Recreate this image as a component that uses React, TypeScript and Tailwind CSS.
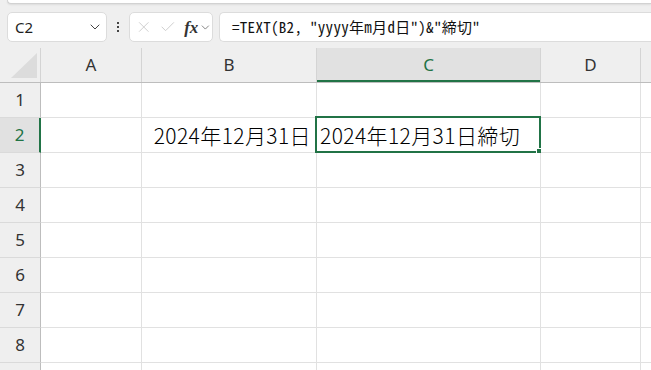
import { Check, ChevronDown, X } from "lucide-react";

const columns = [
  { id: "A", width: "w-[101px]" },
  { id: "B", width: "w-[175px]" },
  { id: "C", width: "w-[224px]" },
  { id: "D", width: "w-[100px]" },
];

const rows = [1, 2, 3, 4, 5, 6, 7, 8, 9];

const ui = { fontFamily: '"Noto Sans", "Open Sans", sans-serif' };
const jp = { fontFamily: '"Noto Sans CJK JP", "Noto Sans", sans-serif' };

function FormulaBar() {
  return (
    <div className="flex items-center h-[30px] mt-[8px] pl-[7px] shrink-0">
      {/* Name box */}
      <div className="flex items-center justify-between w-[100px] h-full bg-white border border-[#dcdcdc] rounded-[5px] pl-[7px] pr-[3px]">
        <span className="text-[15px] text-[#1f1f1f]" style={ui}>
          C2
        </span>
        <ChevronDown size={16} strokeWidth={1.5} className="text-[#444]" />
      </div>

      {/* Grip dots */}
      <div className="flex flex-col items-center justify-center gap-[2px] w-[22px]">
        <span className="w-[2px] h-[2px] bg-[#444]" />
        <span className="w-[2px] h-[2px] bg-[#444]" />
        <span className="w-[2px] h-[2px] bg-[#444]" />
      </div>

      {/* Cancel / enter / fx */}
      <div className="flex items-center w-[84px] h-full bg-white border border-[#dcdcdc] rounded-[5px] pl-[5px]">
        <X size={18} strokeWidth={1.2} className="text-[#c8c8c8]" />
        <Check size={18} strokeWidth={1.2} className="text-[#c8c8c8] ml-[6px]" />
        <span
          className="ml-[8px] text-[17px] italic font-semibold text-[#333] leading-none"
          style={{ fontFamily: '"Liberation Serif", serif' }}
        >
          fx
        </span>
        <ChevronDown size={13} strokeWidth={1.5} className="text-[#666] ml-[1px]" />
      </div>

      {/* Formula input */}
      <div className="flex items-center flex-1 h-full ml-[6px] bg-white border border-r-0 border-[#dcdcdc] rounded-l-[5px] pl-[12px]">
        <span
          className="text-[15px] font-light tracking-[0.3px] text-[#111] whitespace-pre"
          style={{ fontFamily: '"Noto Sans Mono CJK JP", "Liberation Mono", "Noto Sans CJK JP", monospace' }}
        >
          =TEXT(B2, "yyyy年m月d日")&amp;"締切"
        </span>
      </div>
    </div>
  );
}

function ColumnHeader() {
  return (
    <div className="flex h-[35px] shrink-0 border-b border-[#bdbdbd] bg-[#efefef]">
      <div className="relative w-[41px] border-r border-[#d4d4d4] shrink-0">
        <svg width="27" height="26" viewBox="0 0 27 26" className="absolute left-[11px] top-[5px]">
          <polygon points="26,0 26,25 0,25" fill="#dcdcdc" />
        </svg>
      </div>
      {columns.map((c) => (
        <div
          key={c.id}
          className={`${c.width} shrink-0 flex items-center justify-center border-r text-[17px] ${
            c.id === "C"
              ? "bg-[#e1e1e1] text-[#217346] border-[#d4d4d4] shadow-[inset_0_-2px_0_#217346]"
              : "text-[#333] border-[#d4d4d4]"
          }`}
          style={ui}
        >
          {c.id}
        </div>
      ))}
      <div className="flex-1" />
    </div>
  );
}

function Row({ n }: { n: number }) {
  const active = n === 2;
  return (
    <div className="flex h-[35px] shrink-0">
      <div
        className={`w-[41px] shrink-0 flex items-center justify-center border-b border-[#dadada] text-[17px] ${
          active
            ? "bg-[#e1e1e1] text-[#217346] border-r-2 border-r-[#217346]"
            : "bg-[#efefef] text-[#333] border-r border-r-[#bdbdbd]"
        }`}
        style={ui}
      >
        {n < 9 ? n : ""}
      </div>
      {columns.map((c) => (
        <div
          key={c.id}
          className={`${c.width} shrink-0 relative flex items-center bg-white border-r border-b border-[#e1e1e1] ${
            c.id === "B" ? "justify-end pr-[5px]" : "pl-[3px]"
          }`}
        >
          {active && c.id === "B" && (
            <span className="text-[21px] font-light tracking-[0.4px] leading-none text-black whitespace-nowrap" style={jp}>
              2024年12月31日
            </span>
          )}
          {active && c.id === "C" && (
            <>
              <span className="text-[21px] font-light tracking-[0.4px] leading-none text-black whitespace-nowrap" style={jp}>
                2024年12月31日締切
              </span>
              <div className="absolute -left-[2px] -top-[2px] -right-[1px] -bottom-[1px] border-2 border-[#217346] pointer-events-none" />
              <div className="absolute -right-[3px] -bottom-[3px] w-[6px] h-[6px] bg-[#217346] outline outline-1 outline-white" />
            </>
          )}
        </div>
      ))}
      <div className="flex-1 bg-white border-b border-[#e1e1e1]" />
    </div>
  );
}

export default function App() {
  return (
    <div className="w-[651px] h-[370px] overflow-hidden bg-[#efefef] flex flex-col">
      {/* Ribbon edge */}
      <div className="h-[4px] ml-[7px] bg-white border-b border-l border-[#d2d2d2] rounded-bl-[6px] shadow-[0_1px_2px_rgba(0,0,0,0.08)] shrink-0" />
      <FormulaBar />
      <div className="h-[6px] shrink-0" />
      <ColumnHeader />
      {rows.map((n) => (
        <Row key={n} n={n} />
      ))}
    </div>
  );
}
